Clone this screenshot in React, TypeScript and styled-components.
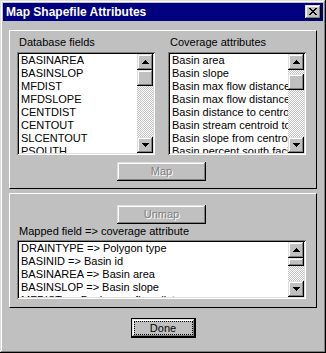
import React from "react";
import styled, { createGlobalStyle } from "styled-components";

const GlobalStyle = createGlobalStyle`
  html, body { margin: 0; padding: 0; background: #c0c0c0; }
  body { font-family: "Liberation Sans", Arial, sans-serif; font-size: 11px; color: #000; }
  * { box-sizing: border-box; }
`;

const raised = `box-shadow: inset -1px -1px #000, inset 1px 1px #dfdfdf, inset -2px -2px #808080, inset 2px 2px #fff;`;
const sunken = `box-shadow: inset 1px 1px #808080, inset -1px -1px #fff, inset 2px 2px #000, inset -2px -2px #dfdfdf;`;

const Window = styled.div`
  width: 326px;
  height: 353px;
  background: #c0c0c0;
  padding: 3px;
  box-shadow: inset -1px -1px #000, inset 1px 1px #dfdfdf, inset -2px -2px #808080, inset 2px 2px #fff;
  display: flex;
  flex-direction: column;
`;

const TitleBar = styled.div`
  height: 18px;
  background: #000080;
  display: flex;
  align-items: center;
  justify-content: space-between;
  padding: 0 2px 0 3px;
`;

const Title = styled.span`
  color: #fff;
  font-weight: bold;
  font-size: 12px;
  line-height: 14px;
`;

const CloseButton = styled.div`
  width: 16px;
  height: 14px;
  background: #c0c0c0;
  ${raised}
  display: flex;
  align-items: center;
  justify-content: center;
  padding-bottom: 1px;
  padding-right: 1px;
`;

const Body = styled.div`
  display: flex;
  flex-direction: column;
  padding: 9px 6px 0;
`;

const Group = styled.div<{ $h: number; $pad: string; $mt?: number }>`
  display: flex;
  flex-direction: column;
  height: ${(p) => p.$h}px;
  margin-top: ${(p) => p.$mt ?? 0}px;
  padding: ${(p) => p.$pad};
  border-style: solid;
  border-width: 1px;
  border-color: #fff #000 #000 #fff;
`;

const Columns = styled.div`
  display: flex;
  gap: 13px;
`;

const Column = styled.div`
  display: flex;
  flex-direction: column;
`;

const Label = styled.div<{ $mb: number }>`
  line-height: 13px;
  height: 13px;
  margin-left: 2px;
  margin-bottom: ${(p) => p.$mb}px;
  white-space: nowrap;
`;

const ListBox = styled.div<{ $w: number; $h: number }>`
  width: ${(p) => p.$w}px;
  height: ${(p) => p.$h}px;
  background: #fff;
  padding: 2px;
  display: flex;
  ${sunken}
`;

const Items = styled.div`
  flex: 1;
  overflow: hidden;
  white-space: nowrap;
`;

const Item = styled.div`
  height: 13px;
  line-height: 13px;
  padding-left: 2px;
`;

const ScrollBar = styled.div`
  width: 16px;
  display: flex;
  flex-direction: column;
  background: repeating-conic-gradient(#c0c0c0 0 25%, #fff 0 50%) 0 0 / 2px 2px;
`;

const ScrollButton = styled.div<{ $end?: boolean }>`
  width: 16px;
  height: 16px;
  flex: none;
  background: #c0c0c0;
  ${raised}
  display: flex;
  align-items: center;
  justify-content: center;
  margin-top: ${(p) => (p.$end ? "auto" : "0")};
`;

const Thumb = styled.div<{ $h: number; $top: number }>`
  width: 16px;
  height: ${(p) => p.$h}px;
  margin-top: ${(p) => p.$top}px;
  flex: none;
  background: #c0c0c0;
  ${raised}
`;

const PushButton = styled.div<{ $w: number; $mt: number }>`
  width: ${(p) => p.$w}px;
  height: 19px;
  margin-top: ${(p) => p.$mt}px;
  align-self: center;
  background: #c0c0c0;
  ${raised}
  display: flex;
  align-items: center;
  justify-content: center;
  color: #808080;
  text-shadow: 1px 1px 0 #fff;
  line-height: 13px;
`;

const DefaultButton = styled.div`
  width: 65px;
  height: 20px;
  margin-top: 10px;
  align-self: center;
  background: #c0c0c0;
  border: 1px solid #000;
  ${raised}
  padding: 2px;
  display: flex;
`;

const FocusRing = styled.div`
  flex: 1;
  border: 1px dotted #000;
  display: flex;
  align-items: center;
  justify-content: center;
  line-height: 13px;
`;

const CloseGlyph = () => (
  <svg width="8" height="7" viewBox="0 0 8 7" shapeRendering="crispEdges">
    <g fill="#000">
      <rect x="0" y="0" width="2" height="1" />
      <rect x="6" y="0" width="2" height="1" />
      <rect x="1" y="1" width="2" height="1" />
      <rect x="5" y="1" width="2" height="1" />
      <rect x="2" y="2" width="4" height="1" />
      <rect x="3" y="3" width="2" height="1" />
      <rect x="2" y="4" width="4" height="1" />
      <rect x="1" y="5" width="2" height="1" />
      <rect x="5" y="5" width="2" height="1" />
      <rect x="0" y="6" width="2" height="1" />
      <rect x="6" y="6" width="2" height="1" />
    </g>
  </svg>
);

const Arrow = ({ down }: { down?: boolean }) => (
  <svg width="7" height="4" viewBox="0 0 7 4" shapeRendering="crispEdges">
    <g fill="#000" transform={down ? "matrix(1 0 0 -1 0 4)" : undefined}>
      <rect x="3" y="0" width="1" height="1" />
      <rect x="2" y="1" width="3" height="1" />
      <rect x="1" y="2" width="5" height="1" />
      <rect x="0" y="3" width="7" height="1" />
    </g>
  </svg>
);

const List = ({
  items,
  w,
  h,
  thumbH,
  thumbTop,
}: {
  items: string[];
  w: number;
  h: number;
  thumbH: number;
  thumbTop: number;
}) => (
  <ListBox $w={w} $h={h}>
    <Items>
      {items.map((t, i) => (
        <Item key={i}>{t}</Item>
      ))}
    </Items>
    <ScrollBar>
      <ScrollButton>
        <Arrow />
      </ScrollButton>
      <Thumb $h={thumbH} $top={thumbTop} />
      <ScrollButton $end>
        <Arrow down />
      </ScrollButton>
    </ScrollBar>
  </ListBox>
);

const dbFields = ["BASINAREA", "BASINSLOP", "MFDIST", "MFDSLOPE", "CENTDIST", "CENTOUT", "SLCENTOUT", "PSOUTH"];
const coverage = [
  "Basin area",
  "Basin slope",
  "Basin max flow distance",
  "Basin max flow distance slope",
  "Basin distance to centroid",
  "Basin stream centroid to outlet",
  "Basin slope from centroid",
  "Basin percent south facing",
];
const mapped = [
  "DRAINTYPE => Polygon type",
  "BASINID => Basin id",
  "BASINAREA => Basin area",
  "BASINSLOP => Basin slope",
  "MFDIST => Basin max flow distance",
];

export default function App() {
  return (
    <>
      <GlobalStyle />
      <Window>
        <TitleBar>
          <Title>Map Shapefile Attributes</Title>
          <CloseButton>
            <CloseGlyph />
          </CloseButton>
        </TitleBar>
        <Body>
          <Group $h={159} $pad="5px 10px 7px 7px">
            <Columns>
              <Column>
                <Label $mb={3}>Database fields</Label>
                <List items={dbFields} w={138} h={103} thumbH={16} thumbTop={0} />
              </Column>
              <Column>
                <Label $mb={3}>Coverage attributes</Label>
                <List items={coverage} w={138} h={103} thumbH={16} thumbTop={4} />
              </Column>
            </Columns>
            <PushButton $w={89} $mt={7}>Map</PushButton>
          </Group>
          <Group $h={115} $mt={4} $pad="11px 10px 8px 7px">
            <PushButton $w={89} $mt={0}>Unmap</PushButton>
            <Label $mb={2} style={{ marginTop: 1 }}>Mapped field =&gt; coverage attribute</Label>
            <List items={mapped} w={289} h={59} thumbH={8} thumbTop={0} />
          </Group>
          <DefaultButton>
            <FocusRing>Done</FocusRing>
          </DefaultButton>
        </Body>
      </Window>
    </>
  );
}
